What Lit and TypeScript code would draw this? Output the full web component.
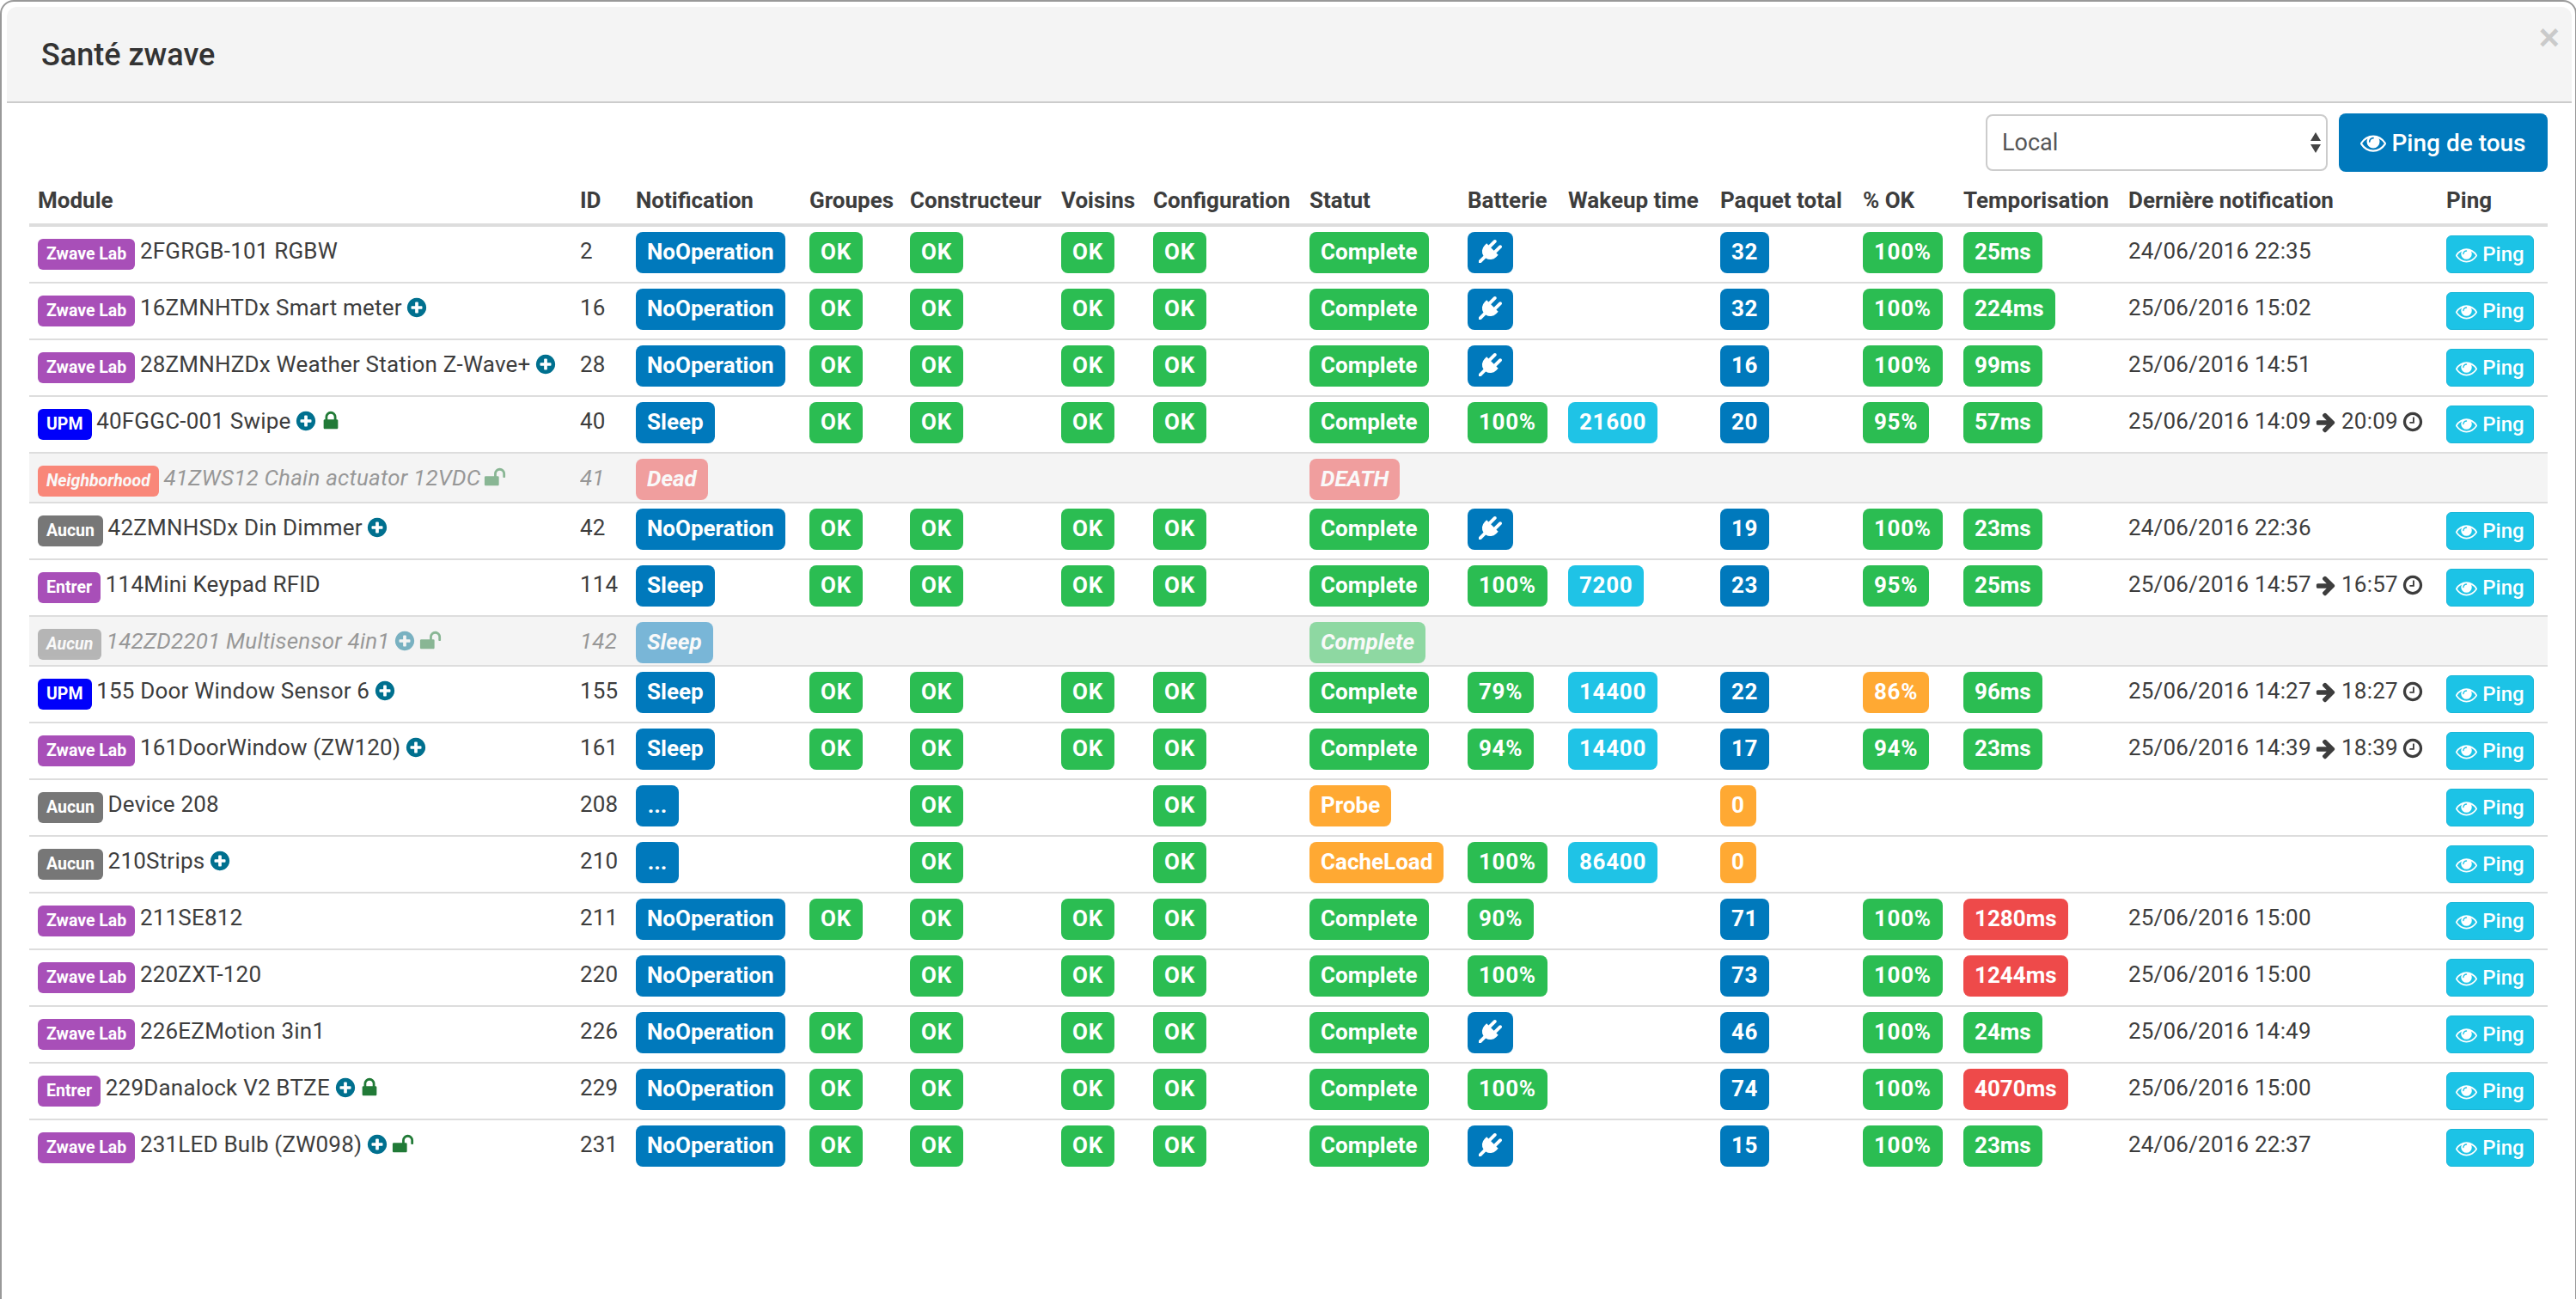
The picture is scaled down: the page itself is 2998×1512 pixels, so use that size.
import { LitElement, html, css, svg } from "lit";
import { customElement } from "lit/decorators.js";

const P: Record<string, string> = {
  plug: "M1755 453q37 38 37 90.5t-37 90.5l-401 400 150 150-160 160q-163 163-389.5 186.5t-411.5-100.5l-362 362h-181v-181l362-362q-124-185-100.5-411.5t186.5-389.5l160-160 150 150 400-401q38-37 91-37t90 37 37 90.5-37 90.5l-400 401 234 234 401-400q38-37 91-37t90 37z",
  plus: "M1344 960v-128q0-26-19-45t-45-19h-256v-256q0-26-19-45t-45-19h-128q-26 0-45 19t-19 45v256h-256q-26 0-45 19t-19 45v128q0 26 19 45t45 19h256v256q0 26 19 45t45 19h128q26 0 45-19t19-45v-256h256q26 0 45-19t19-45zm320-64q0 209-103 385.5t-279.5 279.5-385.5 103-385.5-103-279.5-279.5-103-385.5 103-385.5 279.5-279.5 385.5-103 385.5 103 279.5 279.5 103 385.5z",
  lock: "M640 768h512v-192q0-106-75-181t-181-75-181 75-75 181v192zm832 96v576q0 40-28 68t-68 28h-960q-40 0-68-28t-28-68v-576q0-40 28-68t68-28h32v-192q0-184 132-316t316-132 316 132 132 316v192h32q40 0 68 28t28 68z",
  unlock: "M1728 576v256q0 26-19 45t-45 19h-64q-26 0-45-19t-19-45v-256q0-106-75-181t-181-75-181 75-75 181v192h96q40 0 68 28t28 68v576q0 40-28 68t-68 28h-960q-40 0-68-28t-28-68v-576q0-40 28-68t68-28h672v-192q0-185 131.5-316.5t316.5-131.5 316.5 131.5 131.5 316.5z",
  eye: "M1664 960q-152-236-381-353 61 104 61 225 0 185-131.5 316.5t-316.5 131.5-316.5-131.5-131.5-316.5q0-121 61-225-229 117-381 353 133 205 333.5 326.5t434.5 121.5 434.5-121.5 333.5-326.5zm-720-384q0-20-14-34t-34-14q-125 0-214.5 89.5t-89.5 214.5q0 20 14 34t34 14 34-14 14-34q0-86 61-147t147-61q20 0 34-14t14-34zm848 384q0 34-20 69-140 230-376.5 368.5t-499.5 138.5-499.5-139-376.5-368q-20-35-20-69t20-69q140-229 376.5-368t499.5-139 499.5 139 376.5 368q20 35 20 69z",
  arrow: "M1600 960q0 54-37 91l-651 651q-39 37-91 37-51 0-90-37l-75-75q-38-38-38-91t38-91l293-293h-704q-52 0-84.5-37.5t-32.5-90.5v-128q0-53 32.5-90.5t84.5-37.5h704l-293-294q-38-36-38-90t38-90l75-75q38-38 90-38 53 0 91 38l651 651q37 35 37 90z",
  clock: "M1024 544v448q0 14-9 23t-23 9h-320q-14 0-23-9t-9-23v-64q0-14 9-23t23-9h224v-352q0-14 9-23t23-9h64q14 0 23 9t9 23zm416 352q0-148-73-273t-198-198-273-73-273 73-198 198-73 273 73 273 198 198 273 73 273-73 198-198 73-273zm224 0q0 209-103 385.5t-279.5 279.5-385.5 103-385.5-103-279.5-279.5-103-385.5 103-385.5 279.5-279.5 385.5-103 385.5 103 279.5 279.5 103 385.5z",
};

const icon = (n: string, cls: string) => html`<svg class="ic ${cls}" viewBox="0 0 1792 1792" fill="currentColor">${svg`<path d=${P[n]}></path>`}</svg>`;

type Row = {
  tag: string; tagC: string; name: string; plus?: boolean; lock?: "lock" | "unlock"; id: string;
  notif: string; g?: boolean; c?: boolean; v?: boolean; cf?: boolean;
  st: string; stC?: string; bat?: string; wake?: string; pk?: string; pkC?: string;
  ok?: string; okC?: string; t?: string; tC?: string; date?: string; to?: string; dead?: boolean;
};

const full = { g: true, c: true, v: true, cf: true, st: "Complete" };
const rows: Row[] = [
  { ...full, tag: "Zwave Lab", tagC: "purple", name: "2FGRGB-101 RGBW", id: "2", notif: "NoOperation", bat: "plug", pk: "32", ok: "100%", t: "25ms", date: "24/06/2016 22:35" },
  { ...full, tag: "Zwave Lab", tagC: "purple", name: "16ZMNHTDx Smart meter", plus: true, id: "16", notif: "NoOperation", bat: "plug", pk: "32", ok: "100%", t: "224ms", date: "25/06/2016 15:02" },
  { ...full, tag: "Zwave Lab", tagC: "purple", name: "28ZMNHZDx Weather Station Z-Wave+", plus: true, id: "28", notif: "NoOperation", bat: "plug", pk: "16", ok: "100%", t: "99ms", date: "25/06/2016 14:51" },
  { ...full, tag: "UPM", tagC: "upm", name: "40FGGC-001 Swipe", plus: true, lock: "lock", id: "40", notif: "Sleep", bat: "100%", wake: "21600", pk: "20", ok: "95%", t: "57ms", date: "25/06/2016 14:09", to: "20:09" },
  { tag: "Neighborhood", tagC: "neigh", name: "41ZWS12 Chain actuator 12VDC", lock: "unlock", id: "41", notif: "Dead", st: "DEATH", stC: "red", dead: true },
  { ...full, tag: "Aucun", tagC: "gray", name: "42ZMNHSDx Din Dimmer", plus: true, id: "42", notif: "NoOperation", bat: "plug", pk: "19", ok: "100%", t: "23ms", date: "24/06/2016 22:36" },
  { ...full, tag: "Entrer", tagC: "purple", name: "114Mini Keypad RFID", id: "114", notif: "Sleep", bat: "100%", wake: "7200", pk: "23", ok: "95%", t: "25ms", date: "25/06/2016 14:57", to: "16:57" },
  { tag: "Aucun", tagC: "gray", name: "142ZD2201 Multisensor 4in1", plus: true, lock: "unlock", id: "142", notif: "Sleep", st: "Complete", dead: true },
  { ...full, tag: "UPM", tagC: "upm", name: "155 Door Window Sensor 6", plus: true, id: "155", notif: "Sleep", bat: "79%", wake: "14400", pk: "22", ok: "86%", okC: "orange", t: "96ms", date: "25/06/2016 14:27", to: "18:27" },
  { ...full, tag: "Zwave Lab", tagC: "purple", name: "161DoorWindow (ZW120)", plus: true, id: "161", notif: "Sleep", bat: "94%", wake: "14400", pk: "17", ok: "94%", t: "23ms", date: "25/06/2016 14:39", to: "18:39" },
  { tag: "Aucun", tagC: "gray", name: "Device 208", id: "208", notif: "...", c: true, cf: true, st: "Probe", stC: "orange", pk: "0", pkC: "orange" },
  { tag: "Aucun", tagC: "gray", name: "210Strips", plus: true, id: "210", notif: "...", c: true, cf: true, st: "CacheLoad", stC: "orange", bat: "100%", wake: "86400", pk: "0", pkC: "orange" },
  { ...full, tag: "Zwave Lab", tagC: "purple", name: "211SE812", id: "211", notif: "NoOperation", bat: "90%", pk: "71", ok: "100%", t: "1280ms", tC: "red", date: "25/06/2016 15:00" },
  { ...full, g: false, tag: "Zwave Lab", tagC: "purple", name: "220ZXT-120", id: "220", notif: "NoOperation", bat: "100%", pk: "73", ok: "100%", t: "1244ms", tC: "red", date: "25/06/2016 15:00" },
  { ...full, tag: "Zwave Lab", tagC: "purple", name: "226EZMotion 3in1", id: "226", notif: "NoOperation", bat: "plug", pk: "46", ok: "100%", t: "24ms", date: "25/06/2016 14:49" },
  { ...full, tag: "Entrer", tagC: "purple", name: "229Danalock V2 BTZE", plus: true, lock: "lock", id: "229", notif: "NoOperation", bat: "100%", pk: "74", ok: "100%", t: "4070ms", tC: "red", date: "25/06/2016 15:00" },
  { ...full, tag: "Zwave Lab", tagC: "purple", name: "231LED Bulb (ZW098)", plus: true, lock: "unlock", id: "231", notif: "NoOperation", bat: "plug", pk: "15", ok: "100%", t: "23ms", date: "24/06/2016 22:37" },
];

const heads = ["Module", "ID", "Notification", "Groupes", "Constructeur", "Voisins", "Configuration", "Statut", "Batterie", "Wakeup time", "Paquet total", "% OK", "Temporisation", "Dernière notification", "Ping"];

const lb = (t: string | undefined, c = "green") => {
  if (!t) return "";
  const kind = t === "..." ? "dots" : /^[\d%OK]+$/.test(t) ? "num" : "";
  return html`<span class="lb ${c} ${kind}">${t}</span>`;
};

@customElement("app-root")
export class AppRoot extends LitElement {
  static styles = css`
    :host { display: block; height: 100vh; overflow: hidden; background: #fff; font-family: Roboto, "Liberation Sans", sans-serif; color: #3d3d3d; }
    .modal { box-sizing: border-box; width: calc(100% + 1px); height: calc(100vh + 20px); border: 2px solid #999; border-radius: 16px; background: #fff; padding: 6px 0 0 6px; }
    .head { position: relative; box-sizing: border-box; height: 112px; margin-right: 4px; background: #f4f4f4; border-bottom: 2px solid #ccc; border-radius: 12px 12px 0 0; padding: 0 0 0 40px; display: flex; align-items: center; }
    h4 { margin: 0; font-size: 36px; font-weight: 500; color: #333; transform: translateY(1px); }
    .close { position: absolute; right: 14px; top: 15px; font: bold 42px/42px "Liberation Sans", sans-serif; color: #000; opacity: .17; }
    .body { padding: 12px 0 0 26px; margin-right: 32px; }
    .tools { display: flex; justify-content: flex-end; align-items: center; gap: 13px; height: 68px; }
    .sel { position: relative; width: 398px; height: 66px; }
    select { appearance: none; box-sizing: border-box; width: 100%; height: 100%; border: 2px solid #ccc; border-radius: 8px; background: #fff; font: 400 27px Roboto, sans-serif; color: #555; padding: 0 17px; }
    .arrows { position: absolute; right: 8px; top: 21px; width: 12px; height: 24px; pointer-events: none; }
    .btnall { box-sizing: border-box; width: 243px; height: 68px; background: #0079bc; color: #fff; border: 0; border-radius: 8px; font: 500 28px Roboto, sans-serif; display: flex; align-items: center; justify-content: center; gap: 6px; padding: 0; }
    .btnall .ic { width: 30px; height: 30px; }
    table { table-layout: fixed; width: 100%; border-collapse: separate; border-spacing: 0; }
    col:nth-child(1) { width: 631px; } col:nth-child(2) { width: 65px; } col:nth-child(3) { width: 202px; }
    col:nth-child(4) { width: 117px; } col:nth-child(5) { width: 176px; } col:nth-child(6) { width: 107px; }
    col:nth-child(7) { width: 182px; } col:nth-child(8) { width: 184px; } col:nth-child(9) { width: 117px; }
    col:nth-child(10) { width: 177px; } col:nth-child(11) { width: 166px; } col:nth-child(12) { width: 117px; }
    col:nth-child(13) { width: 192px; } col:nth-child(14) { width: 370px; }
    th { height: 54px; box-sizing: content-box; padding: 6px 10px 0; text-align: left; font-size: 26px; font-weight: 700; white-space: nowrap; border-bottom: 4px solid #ddd; color: #3d3d3d; line-height: 40px; vertical-align: middle; }
    td { padding: 6px 10px 10px; border-bottom: 2px solid #ddd; font-size: 26px; letter-spacing: .2px; line-height: 45px; vertical-align: top; white-space: nowrap; }
    tr:last-child td { border-bottom: 0; }
    tr.dead td { background: #f4f4f4; padding-bottom: 2px; }
    tr.dead .c { opacity: .5; font-style: italic; }
    .c { min-height: 45px; }
    .lb { display: inline-block; vertical-align: top; height: 48px; line-height: 46px; padding: 0 13px; border-radius: 8px; font-size: 26px; font-weight: 700; color: #fff; letter-spacing: 0; }
    .lb.num { letter-spacing: .7px; }
    .lb.dots { min-width: 24px; text-align: center; }
    .lb .ic { width: 27px; height: 27px; margin: 9px 0 0; display: block; }
    .green { background: #2bbd52; } .blue { background: #0079bc; } .cyan { background: #1fc3e6; }
    .orange { background: #ffa933; } .red { background: #ee4a4a; }
    .tag { display: inline-block; vertical-align: top; margin: 8px -1px 0 0; height: 36px; line-height: 35px; padding: 0 10px; border-radius: 6px; font-size: 19.5px; font-weight: 700; letter-spacing: 0; color: #fff; }
    .purple { background: #a84fb8; } .upm { background: #0000fa; } .gray { background: #777; } .neigh { background: #ff1c00; }
    .ic { display: inline-block; vertical-align: middle; }
    .plus { width: 26px; height: 26px; color: #00708f; margin: -4px 0 0 -2px; }
    .lk { width: 26px; height: 26px; color: #217a37; margin: -4px 0 0 -3px; }
    .lk.closed { margin-left: -4px; }
    .arr { width: 26px; height: 26px; margin: -2px -2px 0; color: #3d3d3d; }
    .clk { width: 26px; height: 26px; margin: -2px 0 0 -2px; color: #3d3d3d; }
    .ping { display: inline-flex; align-items: center; justify-content: center; gap: 6px; box-sizing: border-box; vertical-align: top; width: 102px; height: 44px; margin-top: 4px; background: #1cc3e6; border: 1px solid #1ab7d8; border-radius: 6px; color: #fff; font: 500 24px Roboto, sans-serif; padding: 0; }
    .ping .ic { width: 25px; height: 25px; }
  `;

  private row(r: Row) {
    const ok = (b?: boolean) => b ? lb("OK") : "";
    const cell = (c: unknown) => html`<td><div class="c">${c}</div></td>`;
    return html`<tr class=${r.dead ? "dead" : ""}>
      ${cell(html`<span class="tag ${r.tagC}">${r.tag}</span> ${r.name}${r.plus ? html` ${icon("plus", "plus")}` : ""}${r.lock ? html` ${icon(r.lock, r.lock === "lock" ? "lk closed" : "lk")}` : ""}`)}
      ${cell(r.id)}
      ${cell(lb(r.notif, r.notif === "Dead" ? "red" : "blue"))}
      ${cell(ok(r.g))}${cell(ok(r.c))}${cell(ok(r.v))}${cell(ok(r.cf))}
      ${cell(lb(r.st, r.stC ?? "green"))}
      ${cell(r.bat === "plug" ? html`<span class="lb blue">${icon("plug", "")}</span>` : lb(r.bat))}
      ${cell(lb(r.wake, "cyan"))}
      ${cell(lb(r.pk, r.pkC ?? "blue"))}
      ${cell(lb(r.ok, r.okC ?? "green"))}
      ${cell(lb(r.t, r.tC ?? "green"))}
      ${cell(r.date ? html`${r.date}${r.to ? html` ${icon("arrow", "arr")} ${r.to} ${icon("clock", "clk")}` : ""}` : "")}
      ${cell(r.dead ? "" : html`<button class="ping">${icon("eye", "")}Ping</button>`)}
    </tr>`;
  }

  render() {
    return html`<div class="modal">
      <div class="head"><h4>Santé zwave</h4><span class="close">×</span></div>
      <div class="body">
        <div class="tools">
          <div class="sel">
            <select><option>Local</option></select>
            <svg class="arrows" viewBox="0 0 12 24" fill="#444"><path d="M6 0l6 10H0zM0 14h12L6 24z"></path></svg>
          </div>
          <button class="btnall">${icon("eye", "")}Ping de tous</button>
        </div>
        <table>
          <colgroup>${heads.map(() => html`<col />`)}</colgroup>
          <thead><tr>${heads.map((h) => html`<th>${h}</th>`)}</tr></thead>
          <tbody>${rows.map((r) => this.row(r))}</tbody>
        </table>
      </div>
    </div>`;
  }
}
